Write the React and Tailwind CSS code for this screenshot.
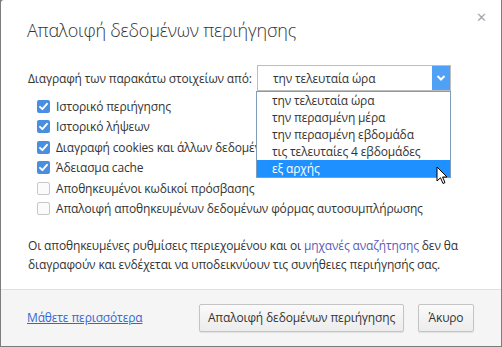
import { useState } from "react";

const options = [
  "την τελευταία ώρα",
  "την περασμένη μέρα",
  "την περασμένη εβδομάδα",
  "τις τελευταίες 4 εβδομάδες",
  "εξ αρχής",
];

const items = [
  { label: "Ιστορικό περιήγησης", checked: true },
  { label: "Ιστορικό λήψεων", checked: true },
  { label: "Διαγραφή cookies και άλλων δεδομένων ιστότοπων και προσθηκών", checked: true },
  { label: "Άδειασμα cache", checked: true },
  { label: "Αποθηκευμένοι κωδικοί πρόσβασης", checked: false },
  { label: "Απαλοιφή αποθηκευμένων δεδομένων φόρμας αυτοσυμπλήρωσης", checked: false },
];

function Checkbox({ checked }) {
  if (checked) {
    return (
      <span className="flex h-[13px] w-[13px] shrink-0 items-center justify-center rounded-[2px] bg-[#4a8ee0]">
        <svg width="11" height="11" viewBox="0 0 11 11">
          <path d="M2 5.8 L4.4 8.2 L9 2.8" fill="none" stroke="#fff" strokeWidth="1.9" strokeLinecap="round" strokeLinejoin="round" />
        </svg>
      </span>
    );
  }
  return <span className="h-[13px] w-[13px] shrink-0 rounded-[2px] border border-[#c8c8c8] bg-[#fbfbfb]" />;
}

function App() {
  const [rows] = useState(items);

  return (
    <div className="h-[347px] w-[502px] overflow-hidden bg-[#7d7d7d] px-px pb-px" style={{ fontFamily: '"Open Sans", "Noto Sans", sans-serif' }}>
      <div className="relative flex h-full flex-col rounded-tl-[3px] bg-white">
        {/* close */}
        <span className="absolute right-[14px] top-[11px] text-[13px] leading-none text-[#a8a8a8]">✕</span>

        {/* HEADER */}
        <h1 className="pl-[26px] pt-[17px] text-[18px] font-light leading-[26px] tracking-[-0.2px] text-[#333]">
          Απαλοιφή δεδομένων περιήγησης
        </h1>

        {/* BODY */}
        <div className="relative flex-1 pl-[27px] pt-[22px] text-[12px] leading-[17px] tracking-[-0.15px] text-[#333]">
          <div className="flex items-center">
            <span className="w-[229px] whitespace-nowrap">Διαγραφή των παρακάτω στοιχείων από:</span>
            <div className="flex h-[26px] w-[194px] items-center border border-[#bdbdbd] bg-white">
              <span className="flex-1 pl-[15px]">την τελευταία ώρα</span>
              <span className="flex h-full w-[18px] items-center justify-center bg-[#4ea1f4]">
                <svg width="10" height="8" viewBox="0 0 10 8">
                  <path d="M1.5 2 L5 5.5 L8.5 2" fill="none" stroke="#fff" strokeWidth="2" />
                </svg>
              </span>
            </div>
          </div>

          <div className="mt-[5px] flex flex-col">
            {rows.map((r) => (
              <div key={r.label} className="flex h-[20.5px] items-center gap-[6px] pl-[9px] whitespace-nowrap">
                <Checkbox checked={r.checked} />
                <span>{r.label}</span>
              </div>
            ))}
          </div>

          <p className="mt-[17px] whitespace-nowrap leading-[19px]">
            Οι αποθηκευμένες ρυθμίσεις περιεχομένου και οι{" "}
            <span className="text-[#5a5ab8]">μηχανές αναζήτησης</span> δεν θα
            <br />
            διαγραφούν και ενδέχεται να υποδεικνύουν τις συνήθειες περιήγησής σας.
          </p>

          {/* DROPDOWN */}
          <div className="absolute left-[255px] top-[48px] w-[195px] border border-[#7f9db9] bg-white">
            {options.map((o, i) => (
              <div
                key={o}
                className={`h-[17px] pl-[15px] leading-[17px] ${i === 4 ? "bg-[#1e90ff] text-white" : "text-[#333]"}`}
              >
                {o}
              </div>
            ))}
          </div>

          {/* cursor */}
          <svg className="absolute left-[435px] top-[123px]" width="13" height="20" viewBox="0 0 13 20">
            <path d="M1 1 L1 15 L4.5 11.8 L7 17.5 L9 16.6 L6.6 11 L11 11 Z" fill="#fff" stroke="#000" strokeWidth="1" strokeLinejoin="round" />
          </svg>
        </div>

        {/* FOOTER */}
        <div className="flex h-[57px] shrink-0 items-center border-t border-[#e0e0e0] bg-[#f5f5f5] pl-[26px] pr-[27px] text-[12px] tracking-[-0.15px]">
          <span className="text-[#3367d6] underline">Μάθετε περισσότερα</span>
          <div className="ml-auto flex gap-[14px]">
            <button className="h-[28px] w-[205px] rounded-[2px] border border-[#c4c4c4] bg-gradient-to-b from-[#fafafa] to-[#ececec] text-[#333] shadow-[0_1px_1px_rgba(0,0,0,0.08)]">
              Απαλοιφή δεδομένων περιήγησης
            </button>
            <button className="h-[28px] w-[56px] rounded-[2px] border border-[#c4c4c4] bg-gradient-to-b from-[#fafafa] to-[#ececec] text-[#333] shadow-[0_1px_1px_rgba(0,0,0,0.08)]">
              Άκυρο
            </button>
          </div>
        </div>
      </div>
    </div>
  );
}

export default App;
